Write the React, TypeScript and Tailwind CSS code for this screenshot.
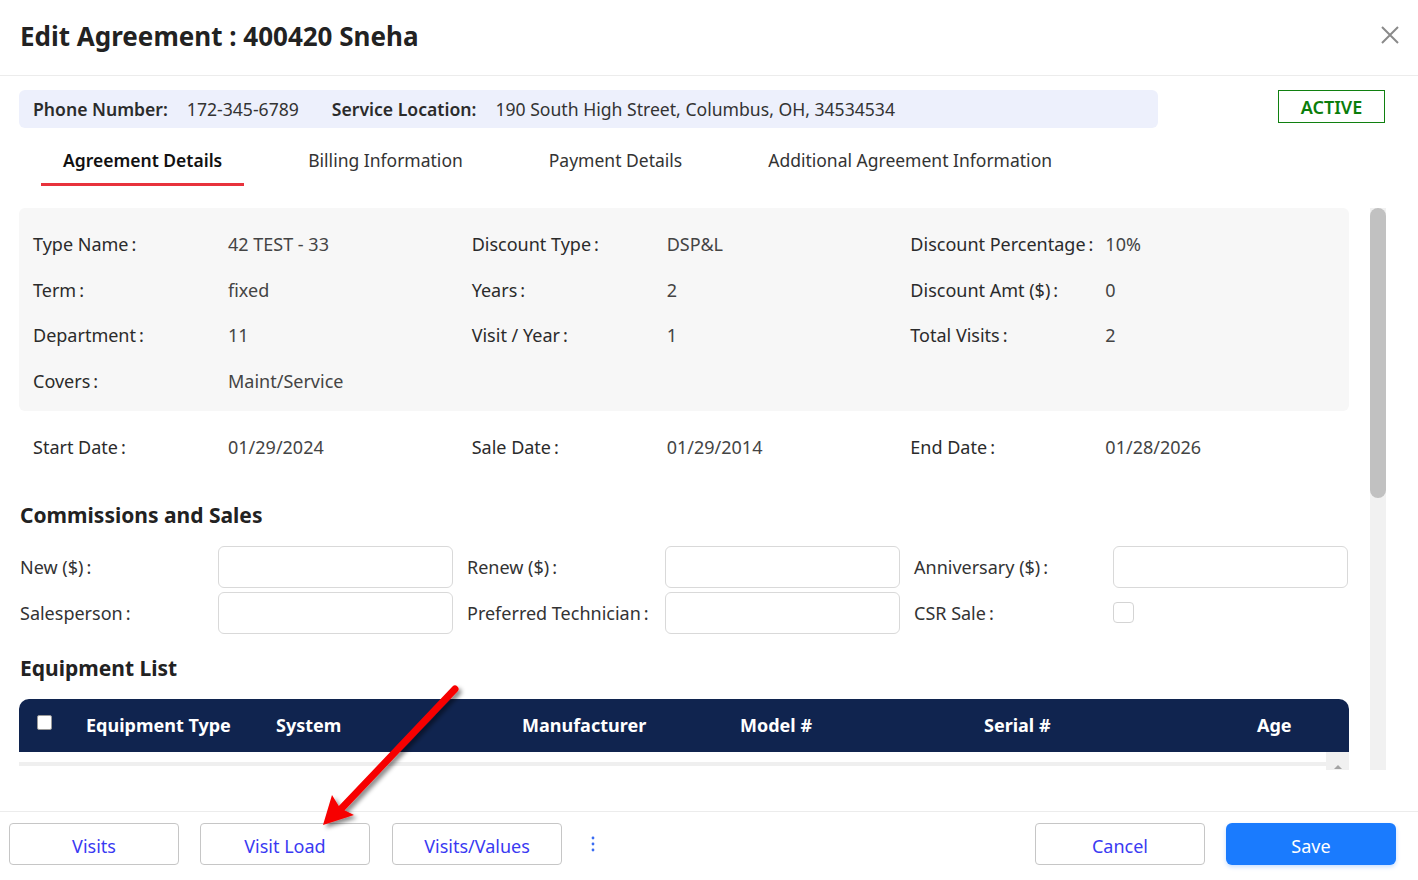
import React from "react";

const font = { fontFamily: '"Noto Sans", "Open Sans", Arial, sans-serif' };

const details = [
  [
    ["Type Name", "42 TEST - 33"],
    ["Discount Type", "DSP&L"],
    ["Discount Percentage", "10%"],
  ],
  [
    ["Term", "fixed"],
    ["Years", "2"],
    ["Discount Amt ($)", "0"],
  ],
  [
    ["Department", "11"],
    ["Visit / Year", "1"],
    ["Total Visits", "2"],
  ],
  [["Covers", "Maint/Service"]],
];

const dates = [
  ["Start Date", "01/29/2024"],
  ["Sale Date", "01/29/2014"],
  ["End Date", "01/28/2026"],
];

function Field({ label, value }: { label: string; value: string }) {
  return (
    <div className="flex w-[439px] items-center">
      <div className="w-[195px] text-[#2b2b2b]">
        {label}
        <span className="ml-[3px]">:</span>
      </div>
      <div className="text-[#444]">{value}</div>
    </div>
  );
}

function Input() {
  return <div className="h-[42px] w-[235px] rounded-[6px] border border-[#d9d9d9] bg-white" />;
}

function FooterButton({ label }: { label: string }) {
  return (
    <button className="h-[42px] w-[170px] rounded-[4px] border border-[#c6c6c6] bg-white pt-[3px] text-[18px] text-[#3a3af2]">
      {label}
    </button>
  );
}

export default function App() {
  return (
    <div
      className="relative h-[880px] w-[1418px] overflow-hidden bg-white text-[18px] leading-[24px] text-[#333]"
      style={font}
    >
      {/* header */}
      <div className="flex h-[76px] items-center justify-between border-b border-[#ececec] pl-5 pr-[18px]">
        <h1 className="-mt-[4px] text-[26px] font-bold leading-[34px] text-[#222]">Edit Agreement : 400420 Sneha</h1>
        <svg width="20" height="20" viewBox="0 0 20 20" className="-mt-[6px]">
          <path d="M2 2 L18 18 M18 2 L2 18" stroke="#8a8a8a" strokeWidth="2" />
        </svg>
      </div>

      {/* info bar */}
      <div className="mt-[14px] flex items-start">
        <div className="ml-[19px] flex h-[38px] w-[1139px] items-center rounded-[6px] bg-[#edf0fc] pl-[14px] text-[17.6px]">
          <span className="font-semibold text-[#2b2b2b]">Phone Number:</span>
          <span className="ml-[19px] text-[#333]">172-345-6789</span>
          <span className="ml-[33px] font-semibold text-[#2b2b2b]">Service Location:</span>
          <span className="ml-[19px] text-[#333]">190 South High Street, Columbus, OH, 34534534</span>
        </div>
        <div className="ml-[120px] flex h-[33px] w-[107px] items-center justify-center border border-[#108010] font-semibold text-[#0a7d0a]">
          ACTIVE
        </div>
      </div>

      {/* tabs */}
      <div className="ml-[41px] flex gap-[42px] text-[17.5px]">
        <div className="border-b-[3px] border-[#e8323c] px-[22px] pb-[11px] pt-[20px] font-semibold text-[#111]">
          Agreement Details
        </div>
        <div className="px-[22px] pb-[11px] pt-[20px] text-[#333]">Billing Information</div>
        <div className="px-[22px] pb-[11px] pt-[20px] text-[#333]">Payment Details</div>
        <div className="px-[22px] pb-[11px] pt-[20px] text-[#333]">Additional Agreement Information</div>
      </div>

      {/* scroll area */}
      <div className="mt-[22px] flex h-[562px]">
        <div className="ml-[19px] w-[1330px] overflow-hidden">
          <div className="rounded-[6px] bg-[#f7f7f7] pb-[7px] pl-[14px] pt-[13px]">
            {details.map((row, i) => (
              <div key={i} className="flex h-[45.7px] items-center">
                {row.map(([l, v]) => (
                  <Field key={l} label={l} value={v} />
                ))}
              </div>
            ))}
          </div>
          <div className="mt-[13px] flex h-[46px] items-center pl-[14px]">
            {dates.map(([l, v]) => (
              <Field key={l} label={l} value={v} />
            ))}
          </div>

          <h2 className="mt-[31px] h-[28px] pl-px text-[21px] font-bold leading-[28px] text-[#222]">
            Commissions and Sales
          </h2>
          <div className="mt-[17px] grid grid-cols-[448px_447px_435px] gap-y-[4px]">
            <div className="flex items-center">
              <div className="w-[199px] pl-px">New ($)<span className="ml-[3px]">:</span></div>
              <Input />
            </div>
            <div className="flex items-center">
              <div className="w-[198px]">Renew ($)<span className="ml-[3px]">:</span></div>
              <Input />
            </div>
            <div className="flex items-center">
              <div className="w-[199px]">Anniversary ($)<span className="ml-[3px]">:</span></div>
              <Input />
            </div>
            <div className="flex items-center">
              <div className="w-[199px] pl-px">Salesperson<span className="ml-[3px]">:</span></div>
              <Input />
            </div>
            <div className="flex items-center">
              <div className="w-[198px]">Preferred Technician<span className="ml-[3px]">:</span></div>
              <Input />
            </div>
            <div className="flex h-[42px] items-center">
              <div className="w-[199px]">CSR Sale<span className="ml-[3px]">:</span></div>
              <div className="h-[21px] w-[21px] rounded-[4px] border border-[#d4d4d4] bg-white" />
            </div>
          </div>

          <h2 className="mt-[20px] h-[28px] pl-px text-[21px] font-bold leading-[28px] text-[#222]">Equipment List</h2>
          <div className="mt-[17px] flex h-[53px] items-center rounded-t-[10px] bg-[#10244f] font-bold text-white">
            <div className="w-[67px] pl-[18px]">
              <div className="-mt-[6px] h-[15px] w-[15px] rounded-[2px] border border-[#999] bg-white" />
            </div>
            <div className="w-[190px]">Equipment Type</div>
            <div className="w-[246px]">System</div>
            <div className="w-[218px]">Manufacturer</div>
            <div className="w-[244px]">Model #</div>
            <div className="w-[273px]">Serial #</div>
            <div>Age</div>
          </div>
          <div className="flex">
            <div className="flex-1">
              <div className="h-[10px]" />
              <div className="h-[4px] bg-[#efefef]" />
            </div>
            <div className="flex h-[18px] w-[23px] justify-center bg-[#f0f0f0] pt-[13px]">
              <div className="h-0 w-0 border-x-[4px] border-b-[4px] border-x-transparent border-b-[#a3a3a3]" />
            </div>
          </div>
        </div>
        {/* scrollbar */}
        <div className="ml-[21px] w-[16px] bg-[#f1f1f1]">
          <div className="h-[290px] rounded-full bg-[#c1c1c1]" />
        </div>
      </div>

      {/* footer */}
      <div className="mt-[41px] flex items-center border-t border-[#ececec] pt-[11px]">
        <div className="ml-[9px] flex items-center gap-[21px]">
          <FooterButton label="Visits" />
          <FooterButton label="Visit Load" />
          <div className="ml-px">
            <FooterButton label="Visits/Values" />
          </div>
          <svg width="6" height="18" viewBox="0 0 6 18" className="ml-[7px]">
            <circle cx="3" cy="3" r="1.4" fill="#3a6cf2" />
            <circle cx="3" cy="9" r="1.4" fill="#3a6cf2" />
            <circle cx="3" cy="15" r="1.4" fill="#3a6cf2" />
          </svg>
        </div>
        <div className="ml-auto mr-[22px] flex gap-[21px]">
          <FooterButton label="Cancel" />
          <button className="h-[42px] w-[170px] rounded-[6px] bg-[#1a7bfe] pt-[3px] text-[18px] text-white shadow-[0_2px_4px_rgba(26,123,254,0.25)]">
            Save
          </button>
        </div>
      </div>

      {/* annotation arrow */}
      <svg className="pointer-events-none absolute left-0 top-0" width="1418" height="880">
        <defs>
          <filter id="sh" x="-20%" y="-20%" width="140%" height="140%">
            <feDropShadow dx="3" dy="3" stdDeviation="2" floodColor="#000" floodOpacity="0.45" />
          </filter>
        </defs>
        <g filter="url(#sh)">
          <line x1="455" y1="689" x2="340" y2="810" stroke="#f70000" strokeWidth="7" strokeLinecap="round" />
          <polygon points="323,825 332,795 340,808 354,815" fill="#f70000" />
        </g>
      </svg>
    </div>
  );
}
